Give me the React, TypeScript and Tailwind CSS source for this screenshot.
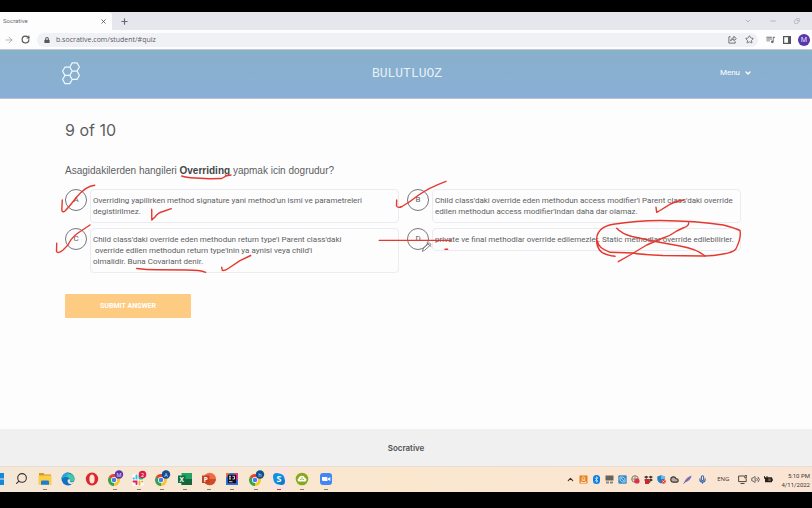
import type { ReactNode } from "react";
import {
  ArrowRight,
  Bluetooth,
  ChevronDown,
  ChevronUp,
  Cloud,
  Copy,
  Mic,
  Minus,
  Plus,
  RotateCw,
  Search,
  Star,
  Volume2,
  X,
} from "lucide-react";
import { FaDropbox, FaLock } from "react-icons/fa";
import { MdOutlineQueueMusic } from "react-icons/md";

const options = [
  {
    letter: "A",
    lines: ["Overriding yapilirken method signature yani method'un ismi ve parametreleri", "degistirilmez."],
  },
  {
    letter: "B",
    lines: [
      "Child class'daki override eden methodun access modifier'i Parent class'daki override",
      "edilen methodun access modifier'indan daha dar olamaz.",
    ],
  },
  {
    letter: "C",
    lines: [
      "Child class'daki override eden methodun return type'i Parent class'daki",
      " override edilen methodun return type'inin ya aynisi veya child'i",
      "olmalidir. Buna Covariant denir.",
    ],
  },
  {
    letter: "D",
    lines: ["private ve final methodlar override edilemezler. Static methodlar override edilebilirler."],
  },
];

function ShareIcon() {
  return (
    <svg viewBox="0 0 10 10" className="size-[9px]" fill="none" stroke="currentColor" strokeWidth="0.9">
      <path d="M3 2H1v7h7V7" />
      <path d="M3 6.500c.3-2.300 1.500-3.300 3.500-3.300V1.500L9.300 4 6.500 6.300V4.800C5 4.800 3.900 5.200 3 6.500z" />
    </svg>
  );
}

function BrowserChrome() {
  return (
    <header className="font-['Open_Sans',sans-serif]">
      <div className="flex h-[18px] items-center bg-[#e6e7ec]">
        <div className="flex h-full w-28 items-center justify-between rounded-tr-sm bg-[#fdfdfe] pl-[3px] pr-[5px]">
          <span className="font-['Roboto',sans-serif] text-[6px] leading-none text-[#6b6d72]">Socrative</span>
          <button aria-label="Close tab" className="text-[#55585e]">
            <X size={7} strokeWidth={3} />
          </button>
        </div>
        <button aria-label="New tab" className="ml-2 text-[#66696f]">
          <Plus size={9} strokeWidth={3} />
        </button>
        <div className="ml-auto flex gap-[17px] pr-3 text-[#9c9ea4]">
          <button aria-label="Search tabs">
            <ChevronDown size={8} />
          </button>
          <button aria-label="Minimize">
            <Minus size={8} />
          </button>
          <button aria-label="Restore">
            <Copy size={6} className="rotate-90" />
          </button>
        </div>
      </div>
      <div className="flex h-5 items-center gap-[7px] border-b border-[#c3cad4] bg-[#fdfdfe] pl-1 pr-0.5">
        <button aria-label="Forward" className="text-[#a5a7ab]">
          <ArrowRight size={10} />
        </button>
        <button aria-label="Reload" className="text-[#505257]">
          <RotateCw size={9} strokeWidth={3} />
        </button>
        <div className="flex h-[14px] flex-1 items-center rounded-full bg-[#f0f1f5] pl-[7px] pr-1 text-[#55575d]">
          <FaLock size={6} />
          <input
            aria-label="Address"
            defaultValue="b.socrative.com/student/#quiz"
            className="ml-1.5 min-w-0 flex-1 bg-transparent text-[7px] leading-none text-[#5a5c61] outline-none"
          />
          <button aria-label="Share" className="mr-2">
            <ShareIcon />
          </button>
          <button aria-label="Bookmark">
            <Star size={9} strokeWidth={2} />
          </button>
        </div>
        <button aria-label="Media controls" className="text-[#6d6f75]">
          <MdOutlineQueueMusic size={11} />
        </button>
        <button aria-label="Side panel" className="text-[#55575c]">
          <svg viewBox="0 0 8 8" className="size-2">
            <path d="M.6.6h6.800v6.800H.6z" fill="none" stroke="currentColor" strokeWidth="1.200" />
            <path d="M5 1h2.500v6H5z" fill="currentColor" />
          </svg>
        </button>
        <button className="size-3 rounded-full bg-[#5936ab] text-center text-[7px] leading-3 text-white">M</button>
      </div>
    </header>
  );
}

function HexLogo() {
  const hex = (x: number, y: number) =>
    `M${x - 4.8} ${y}L${x - 2.4} ${y - 4.15}H${x + 2.4}L${x + 4.8} ${y}L${x + 2.4} ${y + 4.15}H${x - 2.4}Z`;
  return (
    <svg viewBox="0 0 18 23" className="h-[23px] w-[18px]" fill="none" stroke="#f0f8fc" strokeWidth="1.200" strokeLinejoin="round">
      <path d={[hex(12.6, 5), hex(5.4, 9.2), hex(12.6, 13.3), hex(5.4, 17.5)].join("")} />
    </svg>
  );
}

function InkLayer() {
  return (
    <svg
      aria-hidden="true"
      viewBox="0 99 812 330"
      className="pointer-events-none absolute left-0 top-0 h-[330px] w-[812px]"
      fill="none"
      stroke="#e5392f"
      strokeWidth="1.400"
      strokeLinecap="round"
      strokeLinejoin="round"
    >
      <path d="M62.300 200L61.800 210Q62.500 213 65 211Q69 207 76.700 197Q86 186 94.700 185.300" />
      <path d="M181.700 176Q186 177.500 195 178L210 178.700L221.700 178.500L226.700 175.700L231 175" />
      <path d="M151.700 209.300L151.800 220L155 217Q158 212.500 163 211.500L171.300 208.700" />
      <path d="M56.700 243.300L56.500 251.500Q58 254 63 250L68 245Q71 238 78 233L90 225" />
      <path d="M136.700 268.500Q148 270 160 269.800L186.700 270Q200 270 205.700 272.300" />
      <path d="M221.700 267.300L222.300 270.300Q225 271 229 268L240 260.700L250.700 255.500" />
      <path d="M396.700 200L396.500 206Q398 208.500 402 206.500Q410 202 418 195.500Q428 188 446 181.300" />
      <path d="M379.300 240.400H450.500M445 249.300H447.700" />
      <path d="M656 207.300L656.700 212.300L660 210.500L668.300 205.300Q673 202 684 200" />
      <path d="M615 256.300Q603 255 599.500 250Q596 245 596.700 238Q598 227 613.300 224.300Q636 220.500 660 220.500Q697 220.800 723.300 225Q735 228 740 230.500Q741.500 238 735.700 249.300Q733 252.500 723.300 254Q714 256 703.300 256L663 255.500Q640 254.500 633 253L610 252.300Q598 248 597.500 241" />
      <path d="M616.700 228.300Q622 234 632 236.500L656.700 241.700L680 246Q697 249 705 256" />
      <path d="M688.700 222.700Q689 226 683 228L676.700 231Q670 236 663 238L646.700 245L630 255L618.300 261.700" />
      <path d="M422.500 251l1-3 6-5 1.500 1.500-6 5.500zM427 243l4 3.500" stroke="#70777d" strokeWidth="0.900" />
    </svg>
  );
}

function Quiz() {
  return (
    <main className="relative min-h-[330px] bg-[#fdfdfe] pb-4 pl-[65px] pr-[71px] pt-[21px] text-[#5d5e62]">
      <h1 className="font-['Inter',sans-serif] text-[16px] leading-5">9 of 10</h1>
      <p className="mt-[23px] font-['Liberation_Sans',sans-serif] text-[10px] leading-4">
        Asagidakilerden hangileri <b className="font-bold text-[#444548]">Overriding</b> yapmak icin dogrudur?
      </p>
      <form onSubmit={(event) => event.preventDefault()} className="font-['Roboto',sans-serif]">
        <div className="mt-[10px] grid grid-cols-2 gap-x-2 gap-y-[5px]">
          {options.map((option) => (
            <label key={option.letter} className="flex min-w-0 items-start gap-[3px]">
              <span className="grid shrink-0 place-items-center">
                <input
                  type="checkbox"
                  name="answer"
                  value={option.letter}
                  className="col-start-1 row-start-1 size-[22px] appearance-none rounded-full border border-[#77787c]"
                />
                <span className="col-start-1 row-start-1 text-[8px] leading-none">{option.letter}</span>
              </span>
              <span className="min-w-0 flex-1 rounded-sm border border-[#ebecf3] px-[2px] py-[5px] text-[8px] leading-[11px]">
                {option.lines.map((line) => (
                  <span key={line} className="block whitespace-pre">
                    {line}
                  </span>
                ))}
              </span>
            </label>
          ))}
        </div>
        <button className="mt-[21px] h-6 w-[126px] rounded-[1px] bg-[#fecb82] text-[7px] font-bold text-white">
          SUBMIT ANSWER
        </button>
      </form>
      <InkLayer />
    </main>
  );
}

function Chrome({ badge, color }: { badge: string; color: string }) {
  return (
    <svg viewBox="0 0 18 18" className="size-[18px] shrink-0">
      <circle cx="8" cy="10" r="6" fill="#f8c52c" />
      <path d="M8 10L2.800 7A6 6 0 0 1 13.200 7z" fill="#e64335" />
      <path d="M8 10L2.800 7A6 6 0 0 0 8 16z" fill="#33a354" />
      <circle cx="8" cy="10" r="3" fill="#fff" />
      <circle cx="8" cy="10" r="2.300" fill="#4083ee" />
      <circle cx="13" cy="4.500" r="4.200" fill={color} />
      <text x="13" y="6.500" fontSize="5.500" fill="#e8e4fa" textAnchor="middle" fontFamily="Open Sans, sans-serif">
        {badge}
      </text>
    </svg>
  );
}

function AppGlyph({ children }: { children: ReactNode }) {
  return (
    <svg viewBox="0 0 14 14" className="size-[14px]">
      {children}
    </svg>
  );
}

const apps: { name: string; icon: ReactNode; mark?: string; tile?: string }[] = [
  {
    name: "Start",
    icon: (
      <AppGlyph>
        <path d="M0 1h6v5.500H0zM7 1h6v5.500H7zM0 7.500h6V13H0zM7 7.500h6V13H7z" fill="#1289dc" />
      </AppGlyph>
    ),
  },
  { name: "Search", icon: <Search size={13} strokeWidth={2} color="#35312d" className="-scale-x-100" /> },
  {
    name: "File Explorer",
    mark: "bg-[#8d7f71]",
    icon: (
      <AppGlyph>
        <path d="M1 1h4.500l1 1.500H13V6H1z" fill="#d89a1c" />
        <path d="M.5 3.500h13v9.300H.5z" fill="#fbce48" />
        <path d="M3 12.800V9.500Q3 8.500 4 8.500h6q1 0 1 1v3.300z" fill="#1c7ed0" />
      </AppGlyph>
    ),
  },
  {
    name: "Edge",
    icon: (
      <AppGlyph>
        <circle cx="7" cy="7" r="6.500" fill="#1470c4" />
        <path d="M.6 7A6.500 6.500 0 0 1 13.500 7c0 2.300-2.500 3-4.700 2.300C9.500 7.500 8 5 5 5 3 5 1.500 5.500.6 7z" fill="#41c8a4" />
        <path d="M.6 7C.9 3 4 .5 7 .5 9 .5 6.500 3 5 5 3 5 1.500 5.500.6 7z" fill="#2aa4dc" />
        <path d="M8.800 7.200c.6 1.700-.6 2 .6 2.700 1 .5 2.600.3 3.500-.2-.6 1.500-2 2.500-3.200 2.300C7 11.800 6 9 7 7.500z" fill="#f2e8da" />
      </AppGlyph>
    ),
  },
  {
    name: "Opera",
    icon: (
      <AppGlyph>
        <ellipse cx="7" cy="7" rx="6.200" ry="6.500" fill="#e0242e" />
        <ellipse cx="7" cy="7" rx="2.600" ry="4.500" fill="#f8e7d5" />
      </AppGlyph>
    ),
  },
  { name: "Chrome M", mark: "bg-[#8d7f71]", icon: <Chrome badge="M" color="#5936ab" /> },
  {
    name: "Slack",
    mark: "bg-[#8d7f71]",
    icon: (
      <svg viewBox="0 0 18 18" className="size-[18px] shrink-0">
        <rect x="2" y="4" width="12" height="12" rx="2" fill="#faf7f5" />
        <g strokeWidth="1.900" strokeLinecap="round">
          <path d="M6.500 5.500V8.500M3.500 8.500H4" stroke="#36bde9" />
          <path d="M9.500 8.500H12.500M9.500 6V8" stroke="#2eb67d" />
          <path d="M9.500 11.500V14.500M12 11.500H12.500" stroke="#ecb22e" />
          <path d="M3.500 11.500H6.500V14" stroke="#e01e5a" fill="none" />
        </g>
        <circle cx="12.500" cy="4.500" r="3.800" fill="#d71f48" />
        <text x="12.500" y="6.500" fontSize="5.500" fill="#fff" textAnchor="middle" fontFamily="Open Sans, sans-serif">
          2
        </text>
      </svg>
    ),
  },
  { name: "Chrome A", mark: "bg-[#8d7f71]", icon: <Chrome badge="A" color="#0c4f92" /> },
  {
    name: "Excel",
    mark: "bg-[#8d7f71]",
    icon: (
      <AppGlyph>
        <path d="M3.500 1H14v12H3.500z" fill="#21a366" />
        <path d="M3.500 7H14v6H3.500z" fill="#14663c" />
        <path d="M0 3.500h7.500V11H0z" fill="#0d7040" />
        <text x="3.750" y="9.500" fontSize="6.500" fontWeight="700" fill="#fff" textAnchor="middle" fontFamily="Open Sans, sans-serif">
          X
        </text>
      </AppGlyph>
    ),
  },
  {
    name: "PowerPoint",
    mark: "bg-[#8d7f71]",
    icon: (
      <AppGlyph>
        <circle cx="7.700" cy="7" r="6.200" fill="#ed6c47" />
        <path d="M7.700 7h6.200a6.200 6.200 0 0 1-12.400 0z" fill="#cf4a28" />
        <path d="M0 3.500h7.500V11H0z" fill="#c2401f" />
        <text x="3.750" y="9.500" fontSize="6.500" fontWeight="700" fill="#fff" textAnchor="middle" fontFamily="Open Sans, sans-serif">
          P
        </text>
      </AppGlyph>
    ),
  },
  {
    name: "IntelliJ IDEA",
    mark: "bg-[#8d7f71]",
    icon: (
      <AppGlyph>
        <path d="M1 1h12v12H1z" fill="#2873e6" />
        <path d="M7 13L13 7V1L9 1z" fill="#d8408c" />
        <path d="M1 1l4 0-4 5z" fill="#f0743c" />
        <path d="M2.800 2.800h8.400v8.400H2.800z" fill="#130f18" />
        <path d="M4 4.300h2M5 4.300V7M4 7h2M7.500 4.300h2V7h-2M4 9.700h3.500" stroke="#fff" strokeWidth="0.800" fill="none" />
      </AppGlyph>
    ),
  },
  { name: "Chrome h", mark: "bg-[#8d7f71]", icon: <Chrome badge="h" color="#0c4f92" /> },
  {
    name: "Skype",
    mark: "bg-[#d23b3b]",
    tile: "bg-[#fbe3df]",
    icon: (
      <AppGlyph>
        <circle cx="7" cy="7" r="5.600" fill="#0b93dc" />
        <circle cx="4.500" cy="4.500" r="3.500" fill="#0b93dc" />
        <circle cx="9.500" cy="9.500" r="3.500" fill="#0a7fd0" />
        <text x="7" y="10.300" fontSize="9" fontWeight="700" fill="#fff" textAnchor="middle" fontFamily="Open Sans, sans-serif">
          S
        </text>
      </AppGlyph>
    ),
  },
  {
    name: "Cloud",
    mark: "bg-[#8d7f71]",
    icon: (
      <AppGlyph>
        <circle cx="7" cy="7" r="6.300" fill="#86a91d" />
        <path d="M3.500 9.500a2 2 0 0 1 .3-3.500A3.300 3.300 0 0 1 10 6a1.900 1.900 0 0 1 .5 3.500z" fill="#fff" />
        <path d="M5 7.500h1.500M7.500 7.500H9M7 5v2" stroke="#86a91d" strokeWidth="0.800" />
      </AppGlyph>
    ),
  },
  {
    name: "Zoom",
    mark: "bg-[#8d7f71]",
    icon: (
      <AppGlyph>
        <rect x="1" y="1" width="12" height="12" rx="3" fill="#4286f5" />
        <path d="M3 5h4.500q1 0 1 1v3H4Q3 9 3 8zM9 6.500L11.300 5v4L9 7.800z" fill="#fff" />
      </AppGlyph>
    ),
  },
];

function TrayGlyph({ children }: { children: ReactNode }) {
  return (
    <svg viewBox="0 0 9 9" className="size-[9px]">
      {children}
    </svg>
  );
}

function Tray() {
  return (
    <div className="flex items-center text-[#3a3530]">
      <div className="flex items-center gap-1">
        <ChevronUp size={9} strokeWidth={3} />
        <TrayGlyph>
          <path d="M.5.5h8v8h-8z" fill="#e5801f" />
          <path d="M2 7.500c0-3 5-3 5 0zM3 3.500a1.500 1.500 0 1 1 3 0 1.500 1.500 0 0 1-3 0" fill="none" stroke="#fff0dc" strokeWidth="0.800" />
        </TrayGlyph>
        <span className="flex h-[9px] w-[9px] items-center justify-center">
          <span className="flex h-[9px] w-[7px] items-center justify-center rounded-full bg-[#087ee6] text-white">
            <Bluetooth size={7} strokeWidth={2} />
          </span>
        </span>
        <TrayGlyph>
          <path d="M.5.5h8v5h-8z" fill="#68625e" />
          <path d="M1 6.500h3v2H1zM5 6.500h3v2H5z" fill="#8e8680" />
        </TrayGlyph>
        <TrayGlyph>
          <rect x=".3" y=".3" width="8.400" height="8.400" rx="1" fill="#368fca" />
          <path d="M2 2h3l2 2v3H4L2 5zM3 3l3 3" fill="none" stroke="#b9e1f6" strokeWidth="0.800" />
        </TrayGlyph>
        <TrayGlyph>
          <circle cx="4" cy="4" r="3.300" fill="none" stroke="#81766d" strokeWidth="1" />
          <path d="M1 4h6M4 1v6" stroke="#81766d" strokeWidth="0.800" />
          <circle cx="6" cy="6" r="2.600" fill="#db3247" />
        </TrayGlyph>
        <span className="grid place-items-center">
          <FaDropbox size={9} className="col-start-1 row-start-1" />
          <span className="col-start-1 row-start-1 mr-1 mt-1 h-[5px] w-1 bg-[#d7212b]" />
        </span>
        <TrayGlyph>
          <path d="M4 .3L7.700 1.500V4Q7 7.500 4 8.500.5 7 .3 4V1.500z" fill="#1b83cd" />
          <path d="M4 .3V4h3.700V1.500z" fill="#65bce9" />
          <circle cx="6.500" cy="6.500" r="2.300" fill="#dc3a32" />
          <path d="M5.500 5.500l2 2m0-2l-2 2" stroke="#fff" strokeWidth="0.700" />
        </TrayGlyph>
        <Cloud size={9} strokeWidth={3} fill="#b5aba2" />
        <TrayGlyph>
          <path d="M.5 8.700Q1.500 5 4 3 6 1.300 8.700.4 8.300 3 6.500 5 4.500 7 2 7.200z" fill="#9079bd" />
          <path d="M.5 8.700L7 2.200" stroke="#5f478f" strokeWidth="0.700" />
        </TrayGlyph>
      </div>
      <Mic size={9} strokeWidth={3} color="#3f67ab" className="ml-1.5" />
      <span className="ml-[10px] text-[6px]">ENG</span>
      <div className="ml-[9px] flex items-center gap-1">
        <TrayGlyph>
          <path d="M6 1H.6v5.600h7.600V4M2.500 8.500h4M6.800.6h2v2.400h-2z" fill="none" stroke="currentColor" strokeWidth="0.900" />
        </TrayGlyph>
        <Volume2 size={9} strokeWidth={2} />
        <TrayGlyph>
          <path d="M1 2.200h7v1.300h.8v2.500H8v1.300H1z" fill="#28231f" />
          <path d="M.5 1v2.500h2.500V1M1.700 3.500V6" fill="none" stroke="#28231f" strokeWidth="0.900" />
          <path d="M4.300 3.500h2.500v2.500H4.300z" fill="#6d655c" />
        </TrayGlyph>
      </div>
      <div className="ml-2 text-right font-['Roboto',sans-serif] text-[6px] leading-[9px]">
        <div>5:10 PM</div>
        <div>4/11/2022</div>
      </div>
    </div>
  );
}

function Taskbar() {
  return (
    <footer className="flex h-[26px] items-center justify-between overflow-hidden border-t border-[#e8ded3] bg-linear-to-r from-[#f5e7d7] via-[#fae7ce] to-[#fae5d5] pr-0.5 font-['Open_Sans',sans-serif]">
      <nav aria-label="Apps" className="-ml-[9px] flex w-[342px] justify-between">
        {apps.map((app) => (
          <button key={app.name} aria-label={app.name} className="flex h-[25px] w-[14px] flex-col items-center">
            <span className={`flex h-[22px] w-[18px] items-center justify-center pt-px ${app.tile ?? ""}`}>{app.icon}</span>
            <span className={`h-px w-1 shrink-0 ${app.mark ?? ""}`} />
          </button>
        ))}
      </nav>
      <Tray />
    </footer>
  );
}

export default function App() {
  return (
    <div className="bg-black pb-4 pt-3">
      <BrowserChrome />
      <div className="grid h-[49px] grid-cols-3 items-center border-b border-[#b9c3d1] bg-linear-to-b from-[#88b1cc] to-[#8aaed5] pb-0.5 pl-[62px] pr-[60px] text-white">
        <HexLogo />
        <span className="text-center font-['Liberation_Mono',monospace] text-[13px] leading-none text-[#e6f1f8]">
          BULUTLUOZ
        </span>
        <button className="flex items-center gap-1 justify-self-end font-['Roboto',sans-serif] text-[8px] leading-none">
          Menu <ChevronDown size={8} strokeWidth={4} />
        </button>
      </div>
      <Quiz />
      <div className="flex h-[37px] items-center justify-center bg-[#f0f0f1] font-['Inter',sans-serif] text-[8px] font-semibold text-[#515256]">
        Socrative
      </div>
      <Taskbar />
    </div>
  );
}
